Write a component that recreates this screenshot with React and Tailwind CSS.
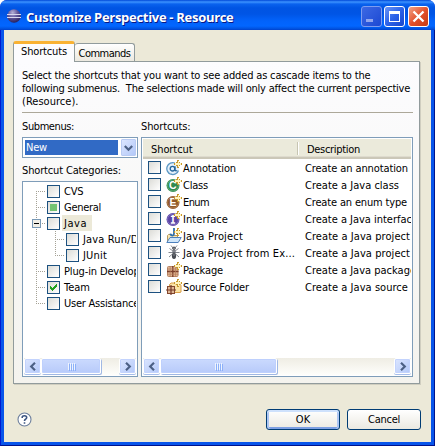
import { useLayoutEffect, useRef } from "react";

// Single-line text whose tracking is tuned so that it spans `w` pixels.
function T({ w, className = "", children }) {
  const ref = useRef(null);
  useLayoutEffect(() => {
    const el = ref.current;
    el.style.letterSpacing = "0px";
    const natural = el.getBoundingClientRect().width;
    el.style.letterSpacing = (w - natural) / children.length + "px";
  }, [w, children]);
  return (
    <span ref={ref} className={"inline-block shrink-0 whitespace-pre " + className}>
      {children}
    </span>
  );
}

function Check({ state }) {
  return (
    <span className="flex size-[13px] shrink-0 items-center justify-center border border-[#1c5180] bg-linear-to-br from-[#dcdcd7] to-white">
      {state === "partial" && <span className="size-[7px] bg-[#73c373]" />}
      {state === "on" && (
        <svg width="9" height="9" viewBox="0 0 9 9" shapeRendering="crispEdges" fill="#21a121">
          <path d="M1 3h1v1h1v1h1v-1h1v-1h1v-1h1v-1h1v3h-1v1h-1v1h-1v1h-1v1h-1v-1h-1v-1h-1z" />
        </svg>
      )}
    </span>
  );
}

const Spark = () => (
  <g shapeRendering="crispEdges">
    <path d="M11 0h2v2h1v1h2v2h-2v1h-1v2h-2v-2h-1v-1h-2v-2h2v-1h1z" fill="#c7982c" />
    <path d="M11.500 1h1v2h2.500v1.500h-2.500v2.500h-1v-2.500h-2.500v-1.500h2.500z" fill="#fff3bd" />
  </g>
);

function Disc({ color, light, letter }) {
  return (
    <g>
      <circle cx="7" cy="8.500" r="6.500" fill={color} />
      <circle cx="7" cy="8.500" r="5.500" fill="none" stroke={light} strokeWidth=".8" />
      <text x="6.900" y="12.300" textAnchor="middle" fontFamily="Liberation Sans" fontWeight="bold" fontSize="10.500" fill="#fff">
        {letter}
      </text>
    </g>
  );
}

const icons = {
  annotation: (
    <g>
      <circle cx="7" cy="8.500" r="6" fill="#e4f0fa" />
      <path d="M12.500 10.500A6 6 0 1 1 9 3M10.500 13.300A6 6 0 0 1 5 14.200" fill="none" stroke="#5b97c4" strokeWidth="1.300" />
      <circle cx="6.500" cy="8.700" r="2.300" fill="none" stroke="#24679c" strokeWidth="1.300" />
      <path d="M9 6.200v3.800q.6 1.500 2.200.5" fill="none" stroke="#24679c" strokeWidth="1.300" />
      <Spark />
    </g>
  ),
  class: (
    <g>
      <Disc color="#2f8a50" light="#65b37d" letter="C" />
      <Spark />
    </g>
  ),
  enum: (
    <g>
      <Disc color="#8f592b" light="#b78355" letter="E" />
      <Spark />
    </g>
  ),
  interface: (
    <g>
      <Disc color="#5a45a5" light="#8a77c7" letter="I" />
      <path d="M4.800 5.300h4.400M4.800 12h4.400" stroke="#fff" strokeWidth="1.300" />
      <Spark />
    </g>
  ),
  project: (
    <g>
      <path d="M1.500 14.500V7.500l1-1h3l1 1h5v7z" fill="#f6e5b4" stroke="#b99a5a" />
      <path d="M.8 14.500l3.200-5h11.200l-3 5z" fill="#cfe6fa" stroke="#4c80bd" />
      <path d="M8 0v5.500q-.2 2-1.800 2t-1.800-1.800" fill="none" stroke="#2d6eaa" strokeWidth="1.800" />
      <Spark />
    </g>
  ),
  ant: (
    <g>
      <path d="M7 3L5 .5M9 3l2-2.500M7 6L3.500 3.500M9 6l3.500-2.500M7 7.500H2.500M9 7.500h4.500M7 8.500l-4 3.500M9 8.500l4 3.500" fill="none" stroke="#858991" />
      <circle cx="8" cy="3.300" r="1.700" fill="#50545b" />
      <ellipse cx="8" cy="6.800" rx="1.600" ry="1.800" fill="#5a5e66" />
      <ellipse cx="8" cy="11" rx="2.100" ry="2.900" fill="#464a51" />
      <path d="M7.500 3.300h1M7.500 6.600h1M7.500 10h1" stroke="#b9bdc5" />
    </g>
  ),
  package: (
    <g>
      <rect x="1.500" y="4.500" width="10.500" height="10" rx="1" fill="#dfb491" stroke="#b98565" />
      <path d="M6.800 4v11M1 9.500h11.500" stroke="#7b3f2b" strokeWidth="1.300" />
      <path d="M4.200 4v11M9.500 4v11M1 7h11.500M1 12.200h11.500" stroke="#b67c5c" strokeWidth=".7" />
      <Spark />
    </g>
  ),
  folder: (
    <g>
      <path d="M3.500 13.500v-8l1.500-1.500h3.500l1.500 1.500h4q1 0 1 1v6.500l-1 .5z" fill="#fbe3a4" stroke="#dba04a" />
      <rect x="1.500" y="7.500" width="7" height="7" fill="#e0b795" stroke="#84482f" />
      <path d="M5 6v10M0 11h10" stroke="#753a27" strokeWidth="1.200" />
      <Spark />
    </g>
  ),
};

const rows = [
  ["annotation", "Annotation", 53, "Create an annotation", 103],
  ["class", "Class", 25, "Create a Java class", 94],
  ["enum", "Enum", 26, "Create an enum type", 102],
  ["interface", "Interface", 45, "Create a Java interface", 113],
  ["project", "Java Project", 60, "Create a Java project", 105],
  ["ant", "Java Project from Ex...", 112, "Create a Java project", 105],
  ["package", "Package", 40, "Create a Java package", 111],
  ["folder", "Source Folder", 66, "Create a Java source", 103],
];

const tree = [
  ["CVS", 19.5],
  ["General", 37, "partial"],
  ["Java", 23],
  ["Java Run/Debug", 81, "", true],
  ["JUnit", 24, "", true],
  ["Plug-in Development", 101],
  ["Team", 26, "on"],
  ["User Assistance", 75],
];

// Dotted connector lines and the expander box left of a tree item.
function Connector({ index, nested }) {
  const last = index === 7;
  const open = index === 2;
  return (
    <svg width={nested ? 42 : 23} height="16" className="shrink-0" shapeRendering="crispEdges" fill="none" stroke="#a5a296">
      <path d={index === 0 ? "M12.500 8V16" : last ? "M12.500 0V8" : "M12.500 0V16"} strokeDasharray="1 1" />
      {nested ? (
        <path d={index === 3 ? "M31.500 0V16M31 8.500H41" : "M31.500 0V8M31 8.500H41"} strokeDasharray="1 1" />
      ) : (
        <path d="M12 8.500H22" strokeDasharray="1 1" />
      )}
      {open && (
        <g>
          <rect x="8.500" y="4.500" width="8" height="8" rx="1" fill="#f0eee6" stroke="#7898b5" />
          <path d="M10 8.500h5" stroke="#000" />
        </g>
      )}
    </svg>
  );
}

function ArrowButton({ dir }) {
  return (
    <span className="flex h-[16px] w-[17px] shrink-0 items-center justify-center rounded-[2px] border border-white bg-linear-to-br from-[#dce6ff] to-[#b3c8f8] shadow-[inset_0_0_0_1px_#c3d3fd,0_1px_0_#a6bdea]">
      <svg width="8" height="9" viewBox="0 0 8 9" fill="none" stroke="#4d6185" strokeWidth="2.200">
        <path d={dir === "left" ? "M6 .8L2.200 4.500 6 8.200" : "M2 .8l3.800 3.700L2 8.200"} />
      </svg>
    </span>
  );
}

function ScrollBar({ thumb }) {
  return (
    <div className="flex h-[17px] shrink-0 bg-linear-to-b from-[#efede4] to-[#fefefb]">
      <ArrowButton dir="left" />
      <span className={"flex h-[16px] shrink-0 items-center justify-center gap-px rounded-[2px] border border-white bg-linear-to-b from-[#cbdafe] to-[#b7cafa] shadow-[inset_0_0_0_1px_#bed0fd,1px_1px_0_#a0b8e4] " + thumb}>
        {[0, 1, 2, 3].map((i) => (
          <i key={i} className="h-[7px] w-px bg-[#eef4fe] shadow-[1px_1px_0_#8cb0f8]" />
        ))}
      </span>
      <span className="flex-1" />
      <ArrowButton dir="right" />
    </div>
  );
}

function TitleBar() {
  return (
    <header className="flex h-[30px] shrink-0 items-start bg-[linear-gradient(to_bottom,#0048d8_0,#3c93ff_2px,#0a62ee_4px,#0054e3_8px,#0055e5_14px,#0263fb_21px,#0266ff_26px,#0050dc_29px,#003fcb_30px)] pl-[6px] pr-[6px] pt-[6px]">
      <svg width="16" height="16" viewBox="0 0 16 16" className="mt-[2px]">
        <defs>
          <radialGradient id="ball" cx=".4" cy=".25" r=".75">
            <stop offset="0" stopColor="#b5b0d6" />
            <stop offset=".5" stopColor="#62579b" />
            <stop offset="1" stopColor="#29225f" />
          </radialGradient>
        </defs>
        <circle cx="8" cy="8" r="6.700" fill="url(#ball)" />
        <path d="M1 6.500h14M1 9.500h14" stroke="#d9d8ef" strokeWidth="1.100" />
      </svg>
      <T w={207.5} className="ml-[4px] mt-[3px] font-['Open_Sans','Noto_Sans',sans-serif] text-[13px] font-bold leading-[16px] text-white [font-stretch:normal] [text-shadow:1px_1px_0_#0a1883]">
        Customize Perspective - Resource
      </T>
      <div className="ml-auto flex gap-[2px]">
        <span className="size-[21px] rounded-[3px] border border-[#7d9cf0] bg-linear-to-br from-[#3c68e4] to-[#1c48d3]">
          <i className="ml-[4px] mt-[12px] block h-[3px] w-[7px] bg-[#91a6ee]" />
        </span>
        <span className="size-[21px] rounded-[3px] border border-white bg-linear-to-br from-[#6b94f5] via-[#2c62e8] to-[#1846cc] pl-[4px] pt-[4px]">
          <i className="block size-[11px] border border-t-[3px] border-white" />
        </span>
        <span className="ml-px size-[21px] rounded-[3px] border border-white bg-linear-to-br from-[#f0a084] via-[#e3512c] to-[#c43b12]">
          <svg width="19" height="19" viewBox="0 0 19 19" stroke="#fff" strokeWidth="2.300">
            <path d="M4.500 4.500l10 10M14.500 4.500l-10 10" />
          </svg>
        </span>
      </div>
    </header>
  );
}

export default function App() {
  return (
    <div className="h-[446px] w-[435px] bg-white font-['DejaVu_Sans_Condensed','DejaVu_Sans',sans-serif] text-[11px] leading-[13px] text-black [font-stretch:condensed]">
      <div className="flex h-full flex-col overflow-hidden rounded-t-[7px] bg-[#0831d9]">
        <TitleBar />
        <div className="flex min-h-0 flex-1 border-x border-b border-[#0019cf] border-r-[#00138c] border-b-[#00138c] bg-[#0855ea] px-[3px] pb-[3px]">
          <main className="flex min-w-0 flex-1 flex-col bg-[#ece9d8] pl-[9px] pr-[10px] pt-[11px]">
            <div className="z-10 flex h-[20px] items-end">
              <div className="-mb-px flex h-[21px] w-[62px] justify-center overflow-hidden rounded-t-[3px] border-x border-t-[3px] border-[#919b9c] border-t-[#f9b233] bg-[#fcfcfe] pt-px">
                <T w={46}>Shortcuts</T>
              </div>
              <div className="flex h-[18px] w-[60px] justify-center rounded-t-[3px] border border-b-0 border-l-0 border-[#919b9c] bg-linear-to-b from-white to-[#ece9e0] pt-[3px]">
                <T w={52}>Commands</T>
              </div>
            </div>

            <section className="flex h-[323px] w-[407px] shrink-0 flex-col border border-[#919b9c] bg-linear-to-b from-[#fcfcfe] to-[#f4f3ee] pl-[8px] pt-[7px] shadow-[1px_1px_0_#d0cec0]">
              <div className="flex flex-col items-start">
                <T w={348.5}>Select the shortcuts that you want to see added as cascade items to the</T>
                <T w={388}>{"following submenus.  The selections made will only affect the current perspective"}</T>
                <T w={56.5}>(Resource).</T>
              </div>
              <div className="mt-[4px] h-px w-[391px] shrink-0 bg-[#aca899]" />

              <div className="mt-[7px] flex gap-[3px]">
                <div className="w-[116px]">
                  <div className="h-[17px]"><T w={52}>Submenus:</T></div>
                  <div className="flex h-[21px] border border-[#7f9db9] bg-white p-px">
                    <div className="ml-px mt-px h-[15px] w-[93px] bg-[#316ac5] pl-px pt-px text-white">
                      <T w={21}>New</T>
                    </div>
                    <div className="ml-auto flex h-[17px] w-[15px] items-center justify-center rounded-[1px] border border-[#b9cbf3] bg-linear-to-br from-[#dce6ff] to-[#b3c8f8]">
                      <svg width="9" height="8" viewBox="0 0 9 8" fill="none" stroke="#4d6185" strokeWidth="2.200">
                        <path d="M.8 2l3.700 3.700L8.200 2" />
                      </svg>
                    </div>
                  </div>
                  <div className="mt-[6px] h-[17px]"><T w={99}>Shortcut Categories:</T></div>
                  <div className="flex h-[196px] flex-col overflow-hidden border border-[#7f9db9] bg-white p-px">
                    <div className="flex-1 overflow-hidden">
                      {tree.map(([name, w, state, nested], i) => (
                        <div key={name} className="flex h-[16px] items-center">
                          <Connector index={i} nested={nested} />
                          <Check state={state} />
                          <span className={"ml-[2px] flex h-[16px] shrink-0 items-center pl-[2px] " + (i === 2 ? "w-[30px] bg-[#ece9d8]" : "")}>
                            <T w={w}>{name}</T>
                          </span>
                        </div>
                      ))}
                    </div>
                    <ScrollBar thumb="w-[60px]" />
                  </div>
                </div>

                <div className="w-[272px]">
                  <div className="h-[17px]"><T w={49.5}>Shortcuts:</T></div>
                  <div className="flex h-[240px] flex-col border border-[#7f9db9] bg-white p-px">
                    <div className="flex h-[20px] shrink-0 items-center border-b-2 border-b-[#cbc7b8] bg-[#ebeadb] pl-[8px] pt-[3px] shadow-[inset_0_-1px_0_#dedbce]">
                      <span className="w-[146px]"><T w={41.5}>Shortcut</T></span>
                      <span className="-mt-[3px] h-[13px] w-[2px] border-l border-r border-l-[#c7c5b2] border-r-white" />
                      <T w={53} className="ml-[8px]">Description</T>
                    </div>
                    <div className="flex-1 overflow-hidden">
                      {rows.map(([icon, name, w, description, dw]) => (
                        <div key={name} className="flex h-[17px] items-center pl-[5px]">
                          <Check />
                          <svg width="16" height="16" viewBox="0 0 16 16" className="ml-[5px] shrink-0">{icons[icon]}</svg>
                          <span className="ml-px w-[122px] shrink-0 pt-px"><T w={w}>{name}</T></span>
                          <span className="pt-px"><T w={dw}>{description}</T></span>
                        </div>
                      ))}
                    </div>
                    <ScrollBar thumb="w-[117px]" />
                  </div>
                </div>
              </div>
            </section>

            <footer className="mt-[25px] flex w-[408px] items-start">
              <svg width="15" height="15" viewBox="0 0 15 15" className="ml-[4px] mt-[3px]">
                <circle cx="7.500" cy="7.500" r="6.500" fill="#fff" stroke="#6d7f9d" strokeWidth="1.100" />
                <path d="M5.200 6V5.200Q5.300 3.800 7.500 3.800T9.700 5.500Q9.700 6.500 8.500 7.200 7.500 7.700 7.500 9M7.500 10.300v1.500" fill="none" stroke="#3b5480" strokeWidth="1.600" />
              </svg>
              <div className="ml-auto flex gap-[7px]">
                <button className="h-[21px] w-[74px] rounded-[3px] border border-[#003c74] bg-linear-to-b from-white to-[#ebe9e1] leading-[13px] shadow-[inset_0_2px_0_#cee1fc,inset_2px_0_0_#adc6f3,inset_-2px_0_0_#adc6f3,inset_0_-2px_0_#7d9fe3]">
                  <T w={14.5}>OK</T>
                </button>
                <button className="h-[21px] w-[74px] rounded-[3px] border border-[#003c74] bg-linear-to-b from-white to-[#ebe9e1] leading-[13px]">
                  <T w={32}>Cancel</T>
                </button>
              </div>
            </footer>
          </main>
        </div>
      </div>
    </div>
  );
}
